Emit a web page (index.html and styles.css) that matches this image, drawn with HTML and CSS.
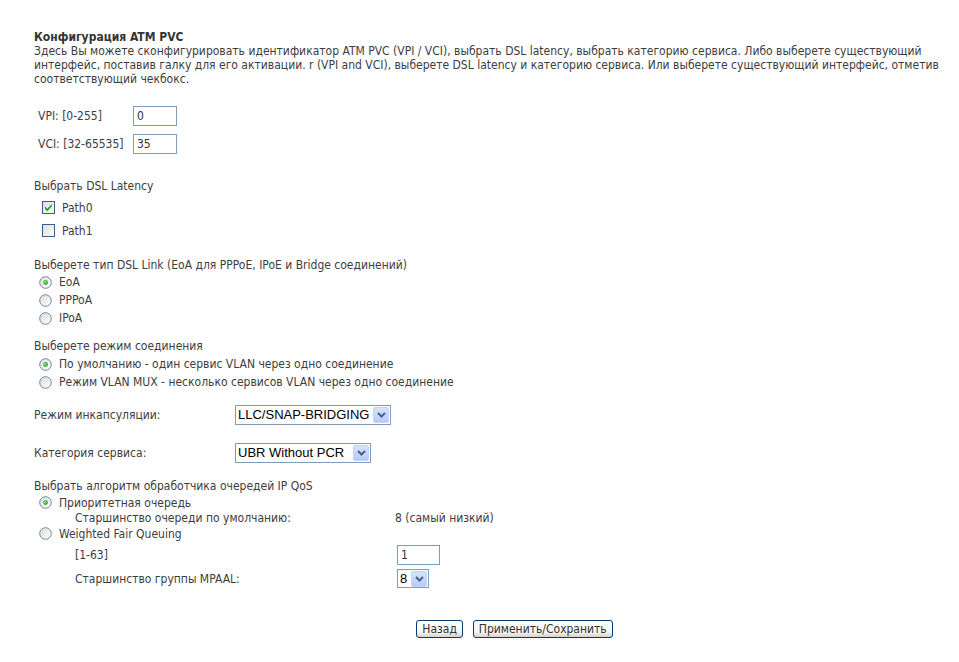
FILE: index.html
```html
<!DOCTYPE html>
<html lang="ru">
<head>
    <meta charset="UTF-8">
    <title>Конфигурация ATM PVC</title>
    <link rel="stylesheet" href="styles.css">
</head>
<body>
    <svg class="defs" width="0" height="0">
        <defs>
            <linearGradient id="boxfill" x1="0" y1="0" x2="1" y2="1">
                <stop offset="0" stop-color="#dcdcd7"/>
                <stop offset="1" stop-color="#ffffff"/>
            </linearGradient>
            <radialGradient id="dotfill" cx="0.4" cy="0.4" r="0.6">
                <stop offset="0" stop-color="#8be38b"/>
                <stop offset="1" stop-color="#21a121"/>
            </radialGradient>
        </defs>
    </svg>

    <form class="page">
        <div class="title">Конфигурация ATM PVC</div>
        <p class="desc">Здесь Вы можете сконфигурировать идентификатор ATM PVC (VPI / VCI), выбрать DSL latency, выбрать категорию сервиса. Либо выберете существующий интерфейс, поставив галку для его активации. r (VPI and VCI), выберете DSL latency и категорию сервиса. Или выберете существующий интерфейс, отметив соответствующий чекбокс.</p>

        <!-- VPI / VCI -->
        <table class="pvc">
            <tr><td class="pvc-label">VPI: [0-255]</td><td><input type="text" class="txt" value="0"></td></tr>
            <tr><td class="pvc-label">VCI: [32-65535]</td><td><input type="text" class="txt" value="35"></td></tr>
        </table>

        <!-- DSL latency -->
        <div class="group latency">
            <div class="caption">Выбрать DSL Latency</div>
            <label class="opt check">
                <svg width="13" height="13" viewBox="0 0 13 13"><rect x="0.5" y="0.5" width="12" height="12" fill="url(#boxfill)" stroke="#3b5f8a"/><path d="M3 5.5 L5.2 7.7 L9.8 3.1 V5.6 L5.2 10.2 L3 8 Z" fill="#21a121"/></svg>
                Path0
            </label>
            <label class="opt check">
                <svg width="13" height="13" viewBox="0 0 13 13"><rect x="0.5" y="0.5" width="12" height="12" fill="url(#boxfill)" stroke="#3b5f8a"/></svg>
                Path1
            </label>
        </div>

        <!-- тип DSL Link -->
        <div class="group link-type">
            <div class="caption">Выберете тип DSL Link (EoA для PPPoE, IPoE и Bridge соединений)</div>
            <label class="opt radio">
                <svg width="13" height="13" viewBox="0 0 13 13"><circle cx="6.5" cy="6.5" r="5.8" fill="url(#boxfill)" stroke="#6f87a6"/><circle cx="6.5" cy="6.5" r="2.4" fill="url(#dotfill)"/></svg>
                EoA
            </label>
            <label class="opt radio">
                <svg width="13" height="13" viewBox="0 0 13 13"><circle cx="6.5" cy="6.5" r="5.8" fill="url(#boxfill)" stroke="#6f87a6"/></svg>
                PPPoA
            </label>
            <label class="opt radio">
                <svg width="13" height="13" viewBox="0 0 13 13"><circle cx="6.5" cy="6.5" r="5.8" fill="url(#boxfill)" stroke="#6f87a6"/></svg>
                IPoA
            </label>
        </div>

        <!-- режим соединения -->
        <div class="group conn-mode">
            <div class="caption">Выберете режим соединения</div>
            <label class="opt radio">
                <svg width="13" height="13" viewBox="0 0 13 13"><circle cx="6.5" cy="6.5" r="5.8" fill="url(#boxfill)" stroke="#6f87a6"/><circle cx="6.5" cy="6.5" r="2.4" fill="url(#dotfill)"/></svg>
                По умолчанию - один сервис VLAN через одно соединение
            </label>
            <label class="opt radio">
                <svg width="13" height="13" viewBox="0 0 13 13"><circle cx="6.5" cy="6.5" r="5.8" fill="url(#boxfill)" stroke="#6f87a6"/></svg>
                Режим VLAN MUX - несколько сервисов VLAN через одно соединение
            </label>
        </div>

        <!-- инкапсуляция и категория -->
        <div class="field encap">
            <span class="field-label">Режим инкапсуляции:</span>
            <span class="sel sel-encap">
                <span class="sel-text">LLC/SNAP-BRIDGING</span>
                <span class="sel-btn"><svg width="9" height="6" viewBox="0 0 9 6"><path d="M1 1 L4.5 4.5 L8 1" fill="none" stroke="#4d6185" stroke-width="2"/></svg></span>
            </span>
        </div>
        <div class="field service">
            <span class="field-label">Категория сервиса:</span>
            <span class="sel sel-service">
                <span class="sel-text">UBR Without PCR</span>
                <span class="sel-btn"><svg width="9" height="6" viewBox="0 0 9 6"><path d="M1 1 L4.5 4.5 L8 1" fill="none" stroke="#4d6185" stroke-width="2"/></svg></span>
            </span>
        </div>

        <!-- IP QoS -->
        <div class="group qos">
            <div class="caption">Выбрать алгоритм обработчика очередей IP QoS</div>
            <label class="opt radio qos-opt">
                <svg width="13" height="13" viewBox="0 0 13 13"><circle cx="6.5" cy="6.5" r="5.8" fill="url(#boxfill)" stroke="#6f87a6"/><circle cx="6.5" cy="6.5" r="2.4" fill="url(#dotfill)"/></svg>
                Приоритетная очередь
            </label>
            <div class="qos-sub prio">
                <span>Старшинство очереди по умолчанию:</span>
                <span>8 (самый низкий)</span>
            </div>
            <label class="opt radio qos-opt">
                <svg width="13" height="13" viewBox="0 0 13 13"><circle cx="6.5" cy="6.5" r="5.8" fill="url(#boxfill)" stroke="#6f87a6"/></svg>
                Weighted Fair Queuing
            </label>
            <div class="qos-sub wfq">
                <span>[1-63]</span>
                <span><input type="text" class="txt txt-small" value="1"></span>
                <span>Старшинство группы MPAAL:</span>
                <span class="sel sel-mpaal">
                    <span class="sel-text">8</span>
                    <span class="sel-btn"><svg width="9" height="6" viewBox="0 0 9 6"><path d="M1 1 L4.5 4.5 L8 1" fill="none" stroke="#4d6185" stroke-width="2"/></svg></span>
                </span>
            </div>
        </div>

        <div class="buttons">
            <button type="button" class="btn">Назад</button>
            <button type="button" class="btn">Применить/Сохранить</button>
        </div>
    </form>
</body>
</html>
```

FILE: styles.css
```css
body {
    margin: 0;
    padding: 0;
    background-color: #fff;
    color: #3d3d3d;
    font-family: "DejaVu Sans", Verdana, sans-serif;
    font-stretch: condensed;
    font-size: 12px;
    line-height: 14px;
}

.defs {
    display: block;
    width: 0;
    height: 0;
}

.page {
    width: 925px;
    padding: 30px 0 0 34px;
}

.title {
    font-weight: bold;
    color: #333;
}

.desc {
    margin: 0;
}

/* VPI / VCI */
.pvc {
    margin-top: 16px;
    border-collapse: collapse;
}

.pvc td {
    padding: 4px 0 4px 4px;
    height: 20px;
}

.pvc-label {
    width: 91px;
}

.txt {
    box-sizing: border-box;
    width: 44px;
    height: 20px;
    margin: 0;
    padding: 0 3px;
    border: 1px solid #7f9db9;
    font-family: "DejaVu Sans", Verdana, sans-serif;
    font-stretch: condensed;
    font-size: 12px;
    color: #333;
    display: block;
}

.txt-small {
    width: 43px;
    margin-left: 2px;
}

/* группы с чекбоксами и радио */
.caption {
    line-height: 16px;
}

.latency .caption {
    margin-bottom: 2px;
}

.conn-mode .caption {
    margin-bottom: 1px;
}

.opt {
    display: flex;
    align-items: center;
    gap: 7px;
    height: 18px;
}

.opt svg {
    flex: none;
}

.check {
    height: 23px;
    padding-left: 8px;
}

.radio {
    padding-left: 5px;
}

.latency {
    margin-top: 20px;
}

.link-type {
    margin-top: 15px;
}

.conn-mode {
    margin-top: 11px;
}

/* выпадающие списки */
.field {
    display: flex;
    align-items: center;
    height: 20px;
}

.field-label {
    width: 201px;
    flex: none;
}

.encap {
    margin-top: 14px;
}

.service {
    margin-top: 18px;
}

.sel {
    box-sizing: border-box;
    display: inline-flex;
    align-items: center;
    justify-content: space-between;
    height: 20px;
    border: 1px solid #7f9db9;
    background: #fff;
    padding: 0 1px 0 2px;
}

.sel-text {
    font-family: "Liberation Sans", Arial, sans-serif;
    font-stretch: normal;
    font-size: 13px;
    color: #000;
}

.sel-btn {
    display: flex;
    align-items: center;
    justify-content: center;
    width: 16px;
    height: 16px;
    border-radius: 2px;
    background: linear-gradient(#d6e3fd, #b5cbf7);
    border: 1px solid #c3d3f6;
    box-sizing: border-box;
}

.sel-encap {
    width: 156px;
}

.sel-service {
    width: 136px;
}

.sel-mpaal {
    width: 32px;
    height: 19px;
    margin-left: 2px;
}

/* IP QoS */
.qos {
    margin-top: 15px;
}

.qos-opt {
    height: 17px;
}

.qos-sub {
    display: grid;
    grid-template-columns: 320px auto;
    align-items: center;
    padding-left: 41px;
}

.prio {
    height: 14px;
}

.wfq {
    margin-top: 3px;
    row-gap: 4px;
    grid-template-rows: 20px 19px;
}

/* кнопки */
.buttons {
    display: flex;
    justify-content: center;
    gap: 10px;
    margin-top: 32px;
    padding-left: 70px;
    width: 889px;
    margin-left: -34px;
}

.btn {
    height: 18px;
    padding: 0 5px;
    border: 1px solid #003c74;
    border-radius: 3px;
    background: linear-gradient(#ffffff, #f4f4f0 70%, #d8d2c6);
    color: #333;
    font-family: "DejaVu Sans", Verdana, sans-serif;
    font-stretch: condensed;
    font-size: 12px;
    line-height: 14px;
}
```
